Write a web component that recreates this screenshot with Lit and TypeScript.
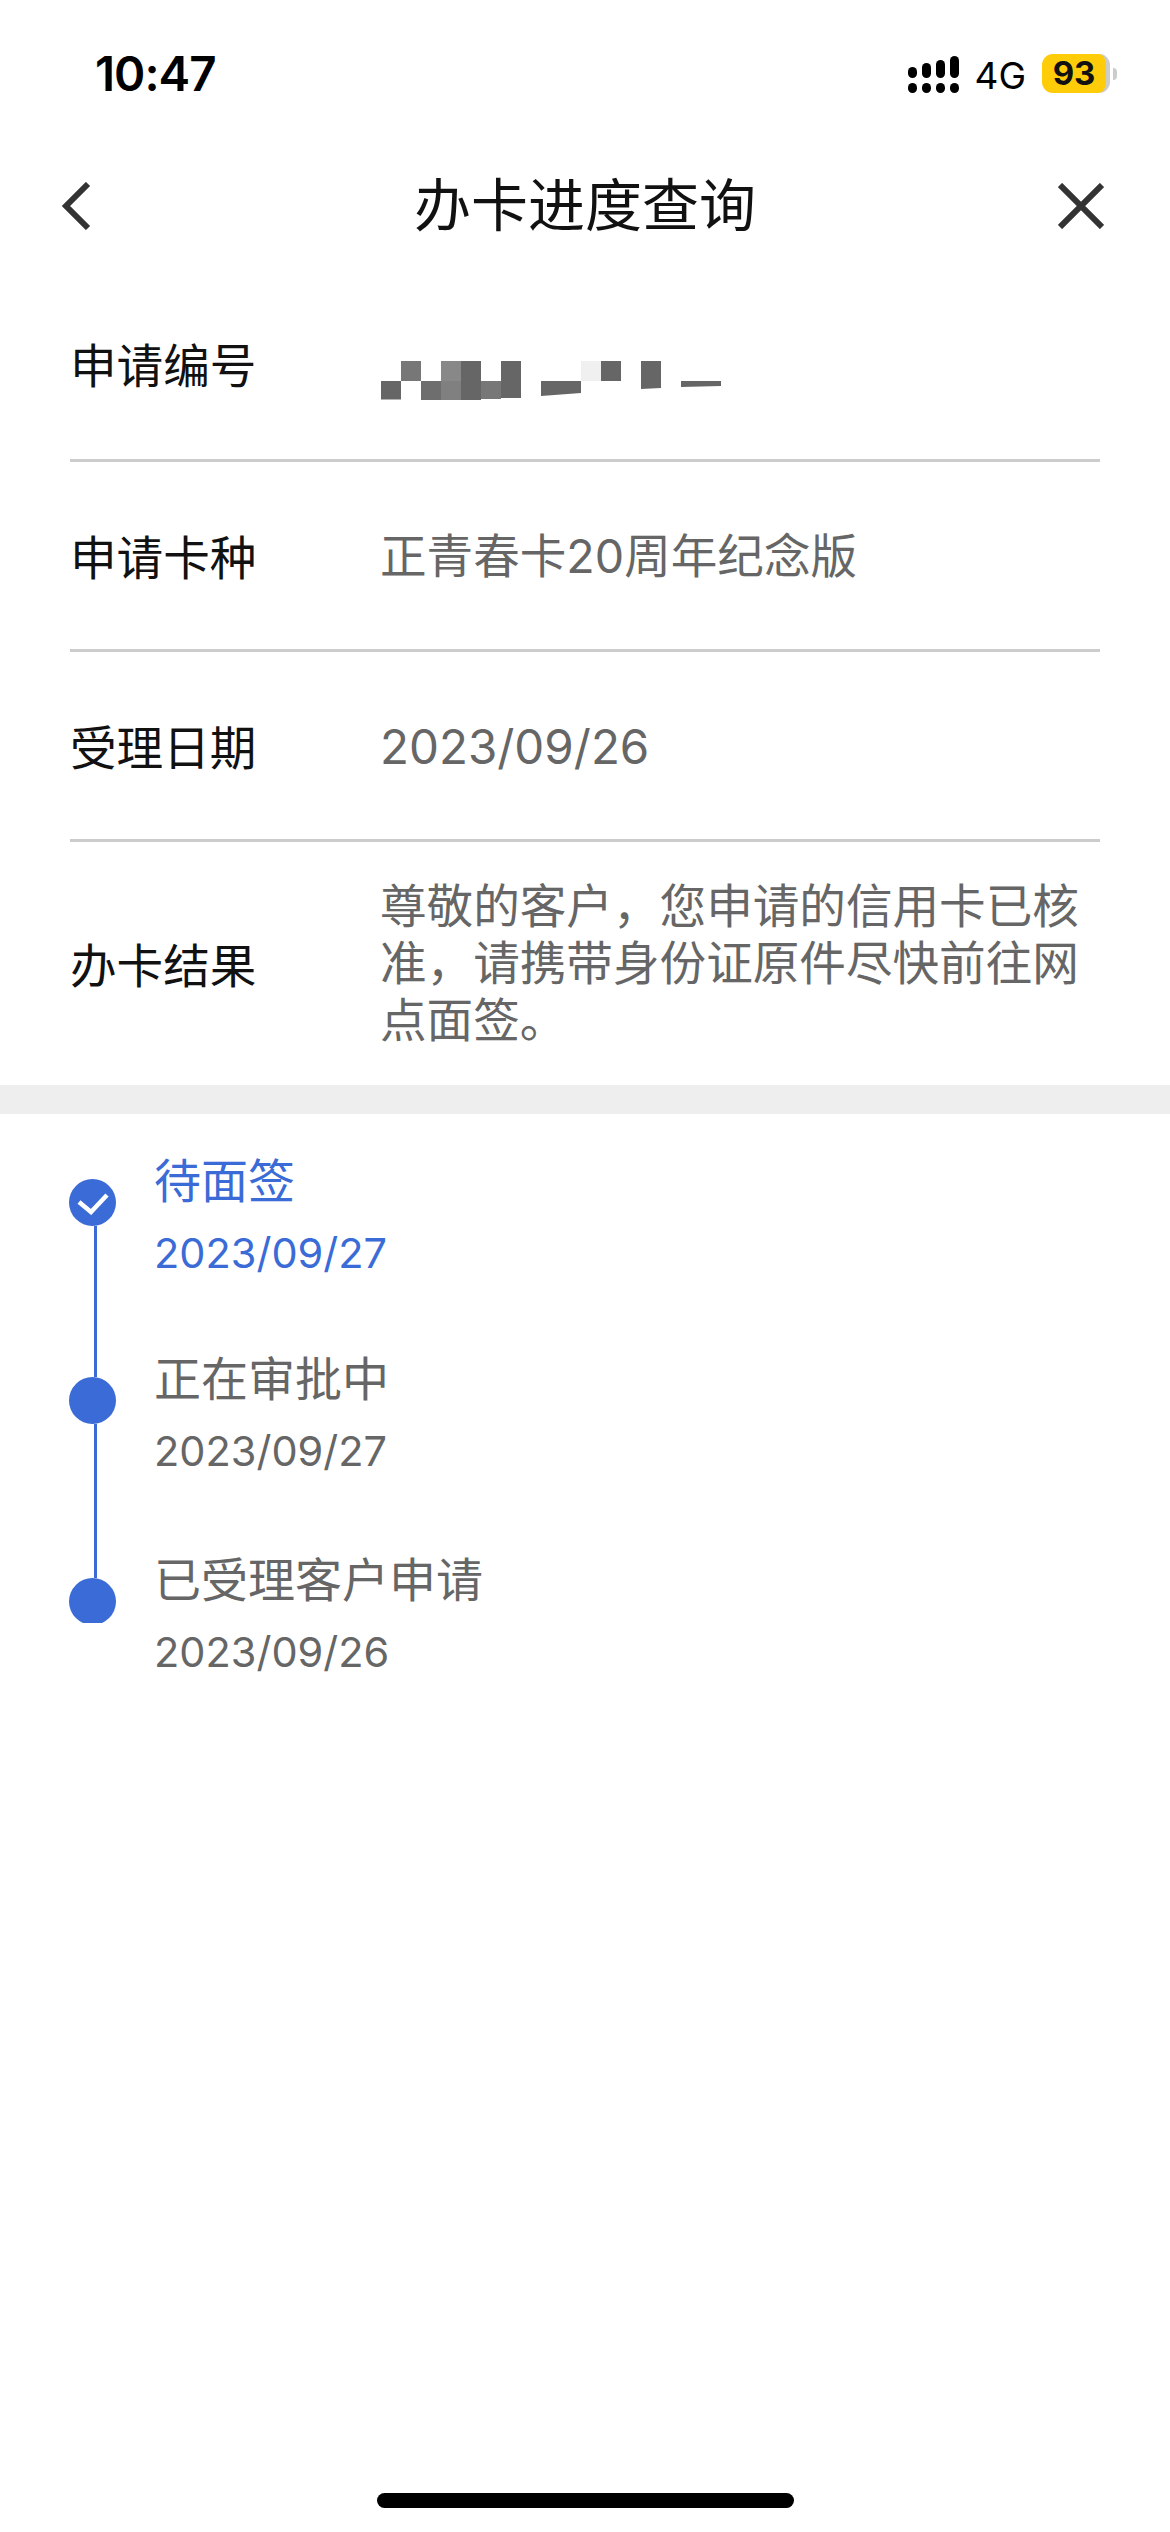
import { LitElement, html, css, svg } from "lit";
import { customElement } from "lit/decorators.js";

const mosaic = [
  ["M20 0h20v20h-20z", "#777"],
  ["M60 0h20v20h-20z", "#888"],
  ["M80 0h20v20h-20z", "#666"],
  ["M120 0h20v20h-20z", "#666"],
  ["M200 0h20v20h-20z", "#f0f0f0"],
  ["M220 0h20v20h-20z", "#666"],
  ["M260 0h20v27l-20 1z", "#666"],
  ["M0 20h20v18.500h-20z", "#666"],
  ["M40 20h20v19h-20z", "#6e6e6e"],
  ["M60 20h20v19h-20z", "#808080"],
  ["M80 20h20v19h-20z", "#666"],
  ["M100 20h20v18h-20z", "#777"],
  ["M120 20h20v17h-20z", "#666"],
  ["M160 20h40v12l-40 3z", "#666"],
  ["M300 20h40v5l-40 1z", "#666"],
];

const steps = [
  { title: "待面签", date: "2023/09/27", active: true, check: true, line: true, pitch: 198 },
  { title: "正在审批中", date: "2023/09/27", active: false, check: false, line: true, pitch: 201 },
  { title: "已受理客户申请", date: "2023/09/26", active: false, check: false, line: false, pitch: 110 },
];

@customElement("app-root")
export class AppRoot extends LitElement {
  static styles = css`
    :host {
      display: block;
      width: 1170px;
      height: 2532px;
      background: #fff;
      position: relative;
      overflow: hidden;
      font-family: "Inter", "Noto Sans CJK SC", sans-serif;
    }
    .status {
      height: 110px;
      display: flex;
      justify-content: space-between;
      align-items: flex-start;
      box-sizing: border-box;
      padding: 48px 53px 0 95px;
    }
    .time {
      font: 600 47.5px/52px "Inter", sans-serif;
      color: #000;
      letter-spacing: -1px;
    }
    .right {
      display: flex;
      align-items: flex-start;
      padding-top: 6px;
    }
    .signal {
      margin-top: 2px;
    }
    .net {
      font: 400 37px/44px "Inter", sans-serif;
      color: #000;
      margin: 0 16px 0 15px;
    }
    .batt {
      width: 68px;
      height: 39px;
      box-sizing: border-box;
      background: #ffcc0a;
      border-right: 4px solid #ccc;
      border-radius: 11px;
      font: 700 33px/39px "Inter", sans-serif;
      color: #111;
      text-align: center;
    }
    .nub {
      width: 4px;
      height: 12px;
      margin: 14px 0 0 3px;
      background: #ccc;
      border-radius: 0 6px 6px 0;
    }
    .nav {
      height: 70px;
      margin-top: 61px;
      padding: 0 66px 0 61px;
      display: grid;
      grid-template-columns: 1fr auto 1fr;
      align-items: center;
    }
    .nav .close {
      justify-self: end;
    }
    .title {
      font-size: 57px;
      line-height: 70px;
      color: #111;
      margin-left: 5px;
    }
    .rows {
      margin: 28px 70px 0;
    }
    .row {
      display: flex;
      align-items: center;
      box-sizing: border-box;
      border-bottom: 3px solid #ccc;
      height: 190px;
    }
    .row.first {
      height: 193px;
    }
    .row.multi {
      height: 243px;
      border-bottom: 0;
    }
    .label {
      width: 310px;
      margin-top: -3px;
      font-size: 46.6px;
      color: #111;
      flex: none;
    }
    .value {
      font-size: 46.6px;
      line-height: 57px;
      color: #666;
    }
    .value.one {
      margin-top: 1px;
    }
    .value.num {
      font-size: 47.5px;
      margin-top: 1px;
    }
    .mosaic {
      margin: 34px 0 0 1px;
    }
    .band {
      height: 29px;
      background: #eee;
    }
    .steps {
      padding: 39px 0 0 69px;
    }
    .step {
      display: flex;
    }
    .rail {
      width: 47px;
      display: flex;
      flex-direction: column;
      padding-top: 26px;
      box-sizing: border-box;
      flex: none;
    }
    .dot {
      width: 47px;
      height: 47px;
      border-radius: 50%;
      background: #3a6bd6;
      display: flex;
      align-items: center;
      justify-content: center;
      flex: none;
    }
    .line {
      width: 3px;
      flex: 1;
      margin: 0 0 -26px 25px;
      background: #3a6bd6;
    }
    .clip {
      height: 45px;
      overflow: hidden;
      flex: none;
    }
    .txt {
      margin-left: 38px;
      color: #666;
    }
    .txt.on {
      color: #3a6bd6;
    }
    .t {
      font-size: 47px;
      line-height: 56px;
    }
    .d {
      font-size: 41.5px;
      line-height: 50px;
      margin-top: 19px;
    }
    .home {
      position: absolute;
      left: 377px;
      top: 2493px;
      width: 417px;
      height: 15px;
      border-radius: 8px;
      background: #000;
    }
  `;

  render() {
    return html`
      <div class="status">
        <div class="time">10:47</div>
        <div class="right">
          <svg class="signal" width="51" height="37" viewBox="0 0 51 37" fill="#000">
            <rect x="0" y="11" width="9" height="11" rx="4.500" />
            <rect x="14" y="7" width="9" height="15" rx="4.500" />
            <rect x="28" y="4" width="9" height="18" rx="4.500" />
            <rect x="42" y="0" width="9" height="22" rx="4.500" />
            <rect x="0" y="27" width="9" height="10" rx="4.500" />
            <rect x="14" y="27" width="9" height="10" rx="4.500" />
            <rect x="28" y="27" width="9" height="10" rx="4.500" />
            <rect x="42" y="27" width="9" height="10" rx="4.500" />
          </svg>
          <div class="net">4G</div>
          <div class="batt">93</div>
          <div class="nub"></div>
        </div>
      </div>
      <div class="nav">
        <svg width="30" height="48" viewBox="0 0 30 48" fill="none" stroke="#333" stroke-width="6">
          <path d="M27 2 L5 24 L27 46" />
        </svg>
        <div class="title">办卡进度查询</div>
        <svg class="close" width="46" height="46" viewBox="0 0 46 46" fill="none" stroke="#333" stroke-width="6">
          <path d="M2 2 L44 44 M44 2 L2 44" />
        </svg>
      </div>
      <div class="rows">
        <div class="row first">
          <div class="label">申请编号</div>
          <svg class="mosaic" width="340" height="40" viewBox="0 0 340 40">
            ${mosaic.map(([d, c]) => svg`<path d=${d} fill=${c} />`)}
          </svg>
        </div>
        <div class="row">
          <div class="label">申请卡种</div>
          <div class="value one">正青春卡20周年纪念版</div>
        </div>
        <div class="row">
          <div class="label">受理日期</div>
          <div class="value num">2023/09/26</div>
        </div>
        <div class="row multi">
          <div class="label">办卡结果</div>
          <div class="value">尊敬的客户，您申请的信用卡已核准，请携带身份证原件尽快前往网点面签。</div>
        </div>
      </div>
      <div class="band"></div>
      <div class="steps">
        ${steps.map(
          (s) => html`
            <div class="step" style="height:${s.pitch}px">
              <div class="rail">
                ${s.line
                  ? html`<div class="dot">
                      ${s.check
                        ? html`<svg width="34" height="24" viewBox="0 0 34 24" fill="none" stroke="#fff" stroke-width="4.500">
                            <path d="M3 11 L15 21 L31 4" />
                          </svg>`
                        : ""}
                    </div>`
                  : html`<div class="clip"><div class="dot"></div></div>`}
                ${s.line ? html`<div class="line"></div>` : ""}
              </div>
              <div class="txt ${s.active ? "on" : ""}">
                <div class="t">${s.title}</div>
                <div class="d">${s.date}</div>
              </div>
            </div>
          `
        )}
      </div>
      <div class="home"></div>
    `;
  }
}
